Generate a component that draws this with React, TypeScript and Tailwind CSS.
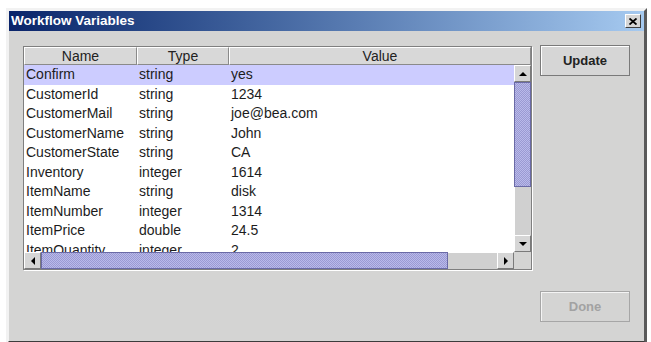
import React from 'react';

interface Variable {
    name: string;
    type: string;
    value: string;
}

const rows: Variable[] = [
    { name: 'Confirm', type: 'string', value: 'yes' },
    { name: 'CustomerId', type: 'string', value: '1234' },
    { name: 'CustomerMail', type: 'string', value: 'joe@bea.com' },
    { name: 'CustomerName', type: 'string', value: 'John' },
    { name: 'CustomerState', type: 'string', value: 'CA' },
    { name: 'Inventory', type: 'integer', value: '1614' },
    { name: 'ItemName', type: 'string', value: 'disk' },
    { name: 'ItemNumber', type: 'integer', value: '1314' },
    { name: 'ItemPrice', type: 'double', value: '24.5' },
    { name: 'ItemQuantity', type: 'integer', value: '2' },
];

const thumb =
    'bg-[repeating-conic-gradient(#9a9ad2_0_25%,#b9b9ea_0_50%)] bg-[length:2px_2px] border border-[#6a6aa6]';

// little 3d scroll button with a black triangle
const ArrowButton: React.FC<{ dir: 'up' | 'down' | 'left' | 'right' }> = ({ dir }) => {
    const points = {
        up: '1,6 5,2 9,6',
        down: '1,2 5,6 9,2',
        left: '6,0 2,4 6,8',
        right: '2,0 6,4 2,8',
    }[dir];
    const vertical = dir === 'up' || dir === 'down';
    return (
        <div className="w-[17px] h-[17px] shrink-0 bg-[#d6d6d6] border border-t-white border-l-white border-r-[#7a7a7a] border-b-[#7a7a7a] flex items-center justify-center">
            <svg width={vertical ? 10 : 8} height={vertical ? 8 : 8} viewBox={vertical ? '0 0 10 8' : '0 0 8 8'}>
                <polygon points={points} fill="#000" />
            </svg>
        </div>
    );
};

const HeaderCell: React.FC<{ label: string; width: string }> = ({ label, width }) => (
    <div className={`${width} h-[18px] shrink-0 bg-[#d8d8d8] border-t border-l border-t-white border-l-white border-r border-b border-r-[#8a8a8a] border-b-[#8a8a8a] flex items-center justify-center text-[14px] leading-none text-[#222]`}>
        {label}
    </div>
);

export default function App() {
    return (
        <div className="w-[651px] h-[342px] bg-white overflow-hidden pl-[6px] pt-[8px] font-['Liberation_Sans',Arial,sans-serif]">
            {/* Window */}
            <div className="w-[641px] h-[336px] bg-[#d4d4d3] border-l-[3px] border-t-[3px] border-r-[3px] border-b-[3px] border-l-[#f2f2f2] border-t-[#f2f2f2] border-r-[#5a5a5a] border-b-[#3c3c3c] flex flex-col">
                {/* Title bar */}
                <div className="h-[20px] mx-0 bg-gradient-to-r from-[#0a246a] to-[#a6caf0] flex items-center justify-between pl-[2px] pr-[3px]">
                    <span className="text-white font-bold text-[13.5px] leading-none">Workflow Variables</span>
                    <div className="w-[16px] h-[14px] bg-[#d6d6d6] border border-t-white border-l-white border-r-[#404040] border-b-[#404040] flex items-center justify-center">
                        <svg width="8" height="7" viewBox="0 0 8 7">
                            <path d="M0.5 0.5 L7.5 6.5 M7.5 0.5 L0.5 6.5" stroke="#000" strokeWidth="1.8" />
                        </svg>
                    </div>
                </div>

                {/* Body */}
                <div className="flex pl-[14px] pt-[15px]">
                    {/* Table */}
                    <div className="w-[509px] h-[224px] border border-[#7f7f7f] shadow-[1px_1px_0_#ffffff] bg-white flex flex-col">
                        <div className="flex">
                            <HeaderCell label="Name" width="w-[113px]" />
                            <HeaderCell label="Type" width="w-[92px]" />
                            <HeaderCell label="Value" width="w-[302px]" />
                        </div>
                        <div className="flex h-[187px]">
                            <div className="w-[490px] h-[187px] overflow-hidden">
                                {rows.map((r, i) => (
                                    <div
                                        key={r.name}
                                        className={`flex h-[19.5px] items-center text-[14px] text-[#1c1c1c] ${i === 0 ? 'bg-[#ccccff]' : ''}`}
                                    >
                                        <div className="w-[113px] pl-[2px] shrink-0">{r.name}</div>
                                        <div className="w-[92px] pl-[2px] shrink-0">{r.type}</div>
                                        <div className="flex-1 pl-[2px]">{r.value}</div>
                                    </div>
                                ))}
                            </div>
                            {/* Vertical scrollbar */}
                            <div className="w-[17px] h-[187px] flex flex-col bg-[#d0d0d0]">
                                <ArrowButton dir="up" />
                                <div className={`h-[105px] ${thumb}`} />
                                <div className="flex-1 border-l border-l-white" />
                                <ArrowButton dir="down" />
                            </div>
                        </div>
                        {/* Horizontal scrollbar */}
                        <div className="flex h-[17px]">
                            <div className="w-[490px] flex bg-[#d0d0d0]">
                                <ArrowButton dir="left" />
                                <div className={`w-[407px] h-[17px] ${thumb}`} />
                                <div className="flex-1 border-t border-t-white" />
                                <ArrowButton dir="right" />
                            </div>
                            <div className="w-[17px] h-[17px] bg-[#d4d4d3]" />
                        </div>
                    </div>

                    {/* Buttons */}
                    <div className="ml-[8px] w-[90px] h-[277px] -mt-[1px] flex flex-col justify-between">
                        <button className="h-[31px] w-[90px] border border-[#7a7a7a] shadow-[inset_1px_1px_0_#ffffff] bg-[#d6d6d6] text-[13px] font-bold text-[#222]">
                            Update
                        </button>
                        <button disabled className="h-[31px] w-[90px] border border-[#a6a6a6] shadow-[inset_1px_1px_0_#f4f4f4] bg-[#d4d4d3] text-[13px] font-bold text-[#a2a2a2]">
                            Done
                        </button>
                    </div>
                </div>
            </div>
        </div>
    );
}
